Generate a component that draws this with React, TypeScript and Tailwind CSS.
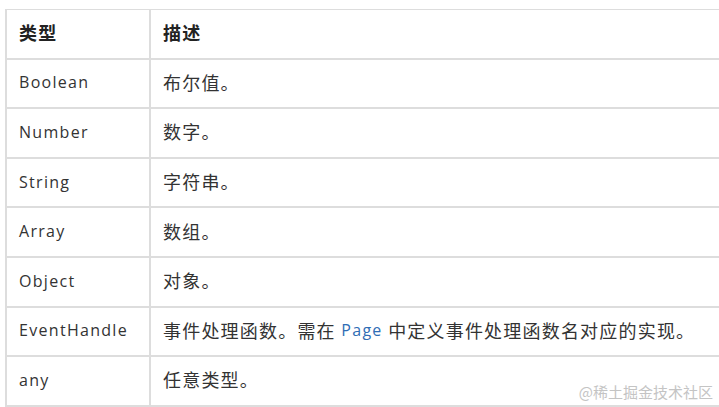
import React from "react";

const latin = { fontFamily: '"Open Sans","Noto Sans CJK SC",sans-serif' };

function C({ children }: { children: React.ReactNode }) {
  return (
    <span
      className="text-[18px] tracking-[1.2px]"
      style={{ fontFamily: '"Noto Sans CJK SC",sans-serif' }}
    >
      {children}
    </span>
  );
}

const rows: { t: string; d: React.ReactNode }[] = [
  { t: "Boolean", d: <C>布尔值。</C> },
  { t: "Number", d: <C>数字。</C> },
  { t: "String", d: <C>字符串。</C> },
  { t: "Array", d: <C>数组。</C> },
  { t: "Object", d: <C>对象。</C> },
  {
    t: "EventHandle",
    d: (
      <>
        <C>事件处理函数。需在</C>
        <span className="text-[#2f6db5]"> Page </span>
        <C>中定义事件处理函数名对应的实现。</C>
      </>
    ),
  },
  { t: "any", d: <C>任意类型。</C> },
];

export default function App() {
  return (
    <div
      className="relative w-[719px] h-[407px] overflow-hidden bg-white text-[#333] text-[16px] tracking-[1.3px]"
      style={latin}
    >
      <div className="ml-[5px] mt-[9px] w-[740px] border-l-2 border-t border-[#dddddd]">
        <div className="grid grid-cols-[144px_1fr] h-[49.6px] border-b-2 border-[#dddddd]">
          <div className="flex items-center pb-[2px] pl-[12px] border-r-2 border-[#dddddd] font-bold text-[#222]">
            <C>类型</C>
          </div>
          <div className="flex items-center pb-[2px] pl-[12px] font-bold text-[#222]">
            <C>描述</C>
          </div>
        </div>
        {rows.map((r) => (
          <div
            key={r.t}
            className="grid grid-cols-[144px_1fr] h-[49.6px] border-b-2 border-[#dddddd]"
          >
            <div className="flex items-center pl-[12px] pb-[2px] border-r-2 border-[#dddddd]">
              {r.t}
            </div>
            <div className="flex items-center pl-[12px] pb-[2px] whitespace-pre">{r.d}</div>
          </div>
        ))}
      </div>
      <div
        className="absolute right-[6px] bottom-[4px] text-[15px] text-[#c4c4c4] tracking-normal"
        style={{ fontFamily: '"Noto Sans CJK SC",sans-serif' }}
      >
        @稀土掘金技术社区
      </div>
    </div>
  );
}
